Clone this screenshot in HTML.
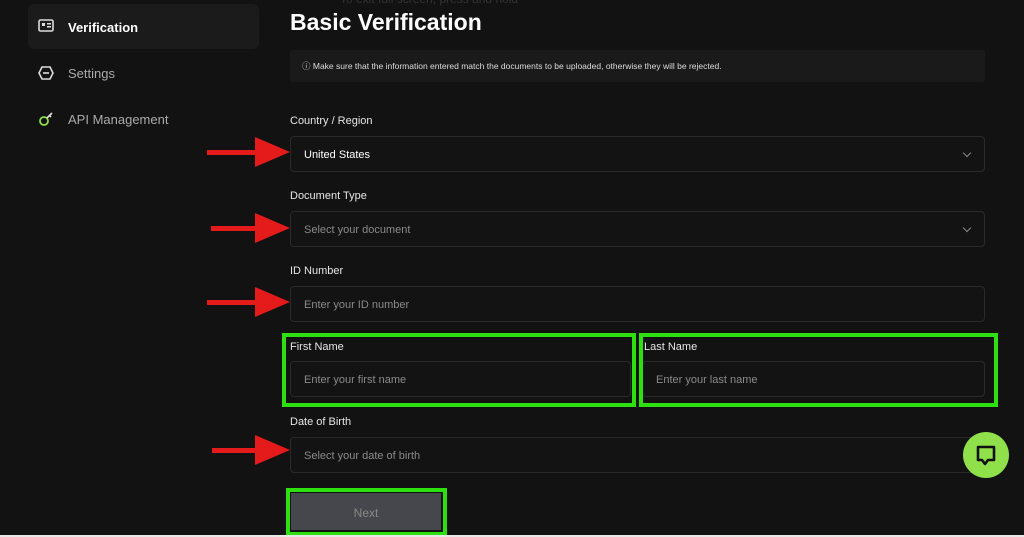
<!DOCTYPE html><html><head><style>
body{margin:0;width:1024px;height:537px;background:#121212;font-family:"Liberation Sans",sans-serif;position:relative;overflow:hidden;color:#fff}
.a{position:absolute}
.in{position:absolute;left:290px;width:695px;height:36px;border:1px solid #2a2a2a;border-radius:4px;background:#131313;box-sizing:border-box;font-size:11px;color:#8a8a8a;padding-left:13px;line-height:36px}
.lb{position:absolute;left:290px;font-size:11px;color:#e6e6e6}
.chev{position:absolute;right:14px;top:13px;width:5px;height:5px;border-right:1px solid #888;border-bottom:1px solid #888;transform:rotate(45deg)}
.g{position:absolute;border:4px solid #2ee00f;box-sizing:border-box}
.side{position:absolute;left:68px;font-size:13px;color:#aaa}
</style></head><body>
<div class="a" style="left:28px;top:4px;width:231px;height:45px;background:#1b1b1b;border-radius:6px"></div>
<svg class="a" style="left:38px;top:19px" width="16" height="14"><rect x="1" y="1" width="14" height="11" rx="1.5" fill="none" stroke="#ddd" stroke-width="1.6"/><rect x="4" y="4" width="3" height="3" fill="#ddd"/><rect x="9" y="4" width="4" height="1.5" fill="#ddd"/><rect x="9" y="7" width="4" height="1.5" fill="#ddd"/></svg>
<div class="side" style="top:20px;color:#fff;font-weight:bold">Verification</div>
<svg class="a" style="left:38px;top:66px" width="16" height="14"><polygon points="4,1 12,1 15,7 12,13 4,13 1,7" fill="none" stroke="#ddd" stroke-width="1.6"/><rect x="5" y="6.2" width="6" height="1.6" fill="#ddd"/></svg>
<div class="side" style="top:66px">Settings</div>
<svg class="a" style="left:38px;top:111px" width="16" height="16"><circle cx="6" cy="10" r="4" fill="none" stroke="#8fe04a" stroke-width="1.8"/><path d="M9 7 L14 2 M11 4 L13 6" stroke="#ddd" stroke-width="1.6"/></svg>
<div class="side" style="top:112px">API Management</div>
<div class="a" style="left:340px;top:-8px;font-size:12px;color:#333">To exit full screen, press and hold</div>
<div class="a" style="left:290px;top:9px;font-size:23px;font-weight:bold">Basic Verification</div>
<div class="a" style="left:290px;top:50px;width:695px;height:32px;background:#1a1a1a;border-radius:3px;font-size:8.5px;color:#ddd;line-height:32px;padding-left:12px;box-sizing:border-box">ⓘ Make sure that the information entered match the documents to be uploaded, otherwise they will be rejected.</div>
<div class="lb" style="top:115px">Country / Region</div>
<div class="in" style="top:136px;color:#fff">United States<div class="chev"></div></div>
<div class="lb" style="top:190px">Document Type</div>
<div class="in" style="top:211px">Select your document<div class="chev"></div></div>
<div class="lb" style="top:265px">ID Number</div>
<div class="in" style="top:286px">Enter your ID number</div>
<div class="lb" style="top:341px">First Name</div>
<div class="in" style="top:361px;width:341px">Enter your first name</div>
<div class="lb" style="left:644px;top:341px">Last Name</div>
<div class="in" style="top:361px;left:642px;width:343px">Enter your last name</div>
<div class="lb" style="top:416px">Date of Birth</div>
<div class="in" style="top:437px">Select your date of birth</div>
<div class="a" style="left:291px;top:493px;width:150px;height:37px;background:#45474d;color:#888;font-size:12px;text-align:center;line-height:40px">Next</div>
<div class="g" style="left:282px;top:333px;width:354px;height:74px"></div>
<div class="g" style="left:639px;top:333px;width:359px;height:74px"></div>
<div class="g" style="left:286px;top:488px;width:161px;height:48px"></div>
<svg class="a" style="left:0;top:0" width="1024" height="537">
<g fill="#e51b1b">
<rect x="207" y="150" width="56" height="5"/><polygon points="255,137 290,152 255,167"/>
<rect x="211" y="226" width="52" height="5"/><polygon points="255,213 290,228 255,243"/>
<rect x="207" y="300" width="56" height="5"/><polygon points="255,287 290,302 255,317"/>
<rect x="212" y="448" width="51" height="5"/><polygon points="255,435 290,450 255,465"/>
</g>
<circle cx="986" cy="455" r="23" fill="#8fe04a"/>
<path d="M978 447 h16 v13 h-6 l-3 4 l-3 -4 h-4 z" fill="none" stroke="#111" stroke-width="2.6" stroke-linejoin="round"/>
<rect x="0" y="535" width="1024" height="2" fill="#e8e8e8"/>
</svg>
</body></html>
